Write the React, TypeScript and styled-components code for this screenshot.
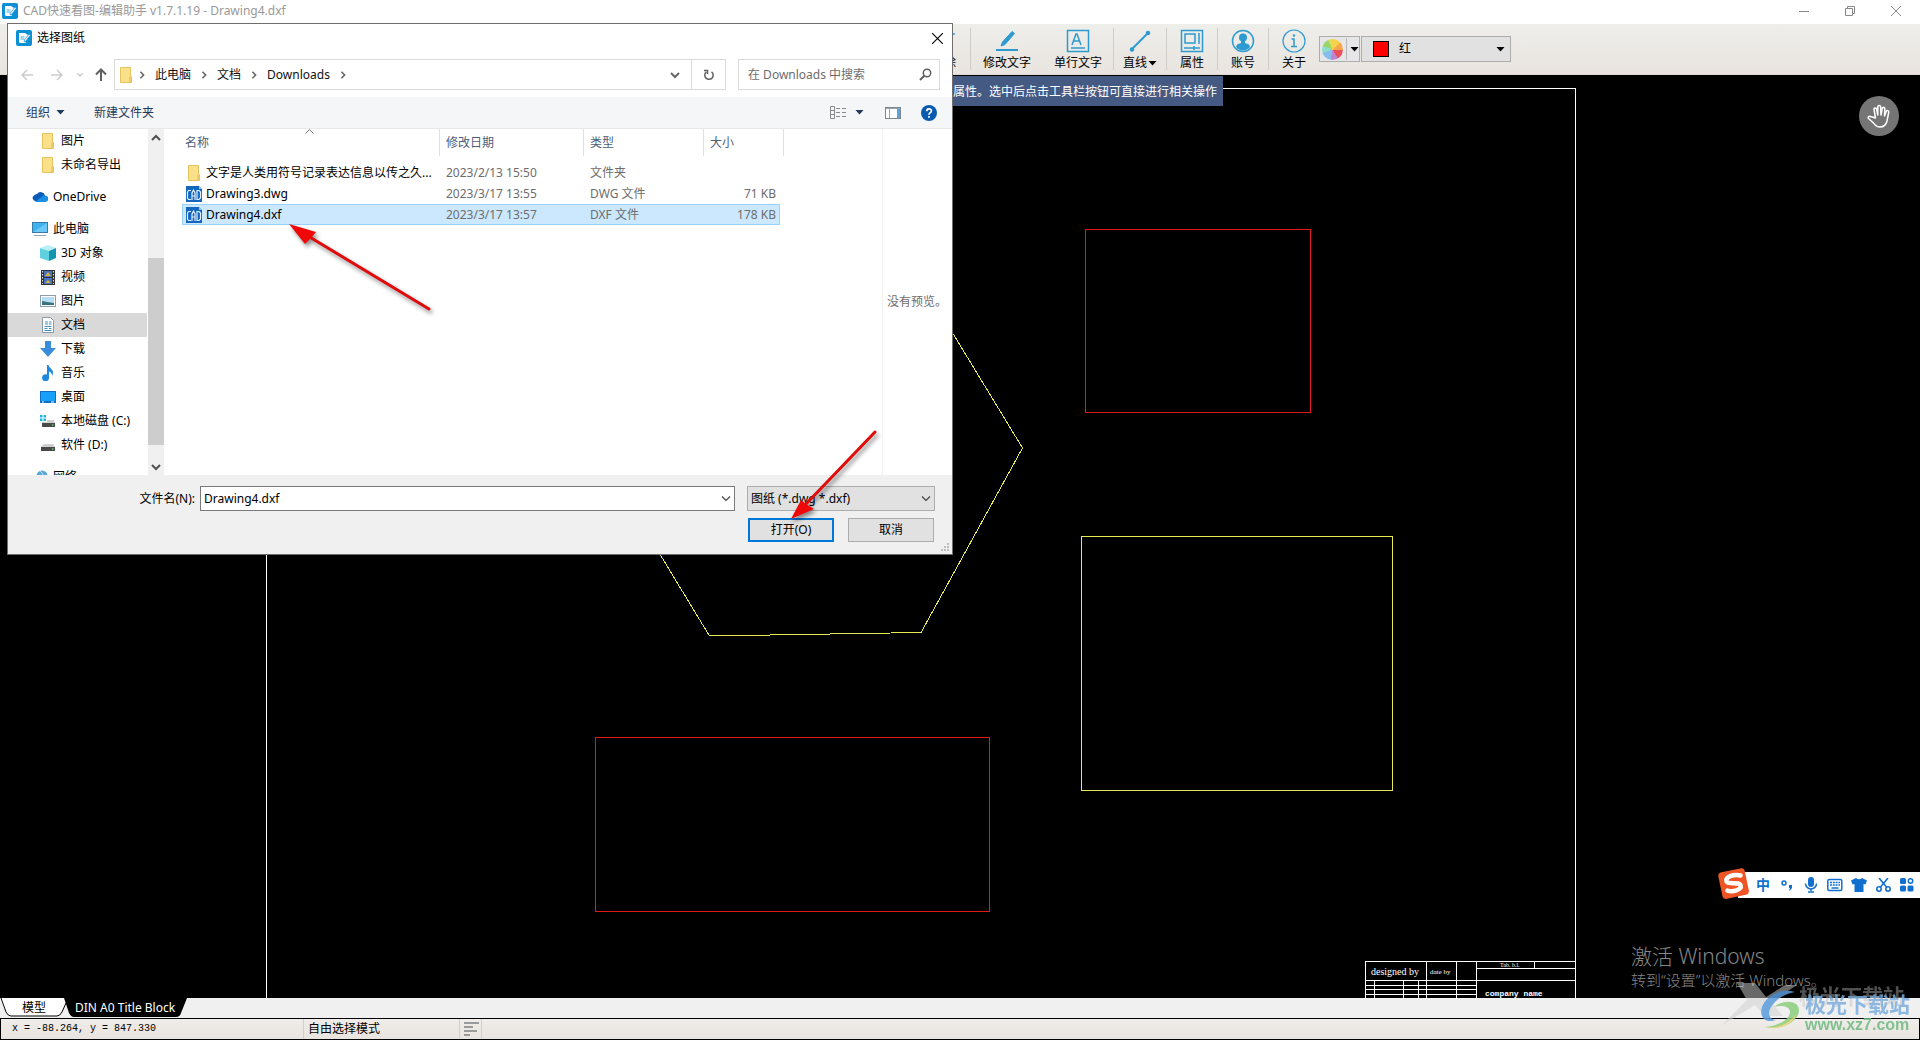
import React from "react";
import styled, { createGlobalStyle, css } from "styled-components";

const uiFont = `"Noto Sans", "Noto Sans CJK SC", sans-serif`;

const GlobalStyle = createGlobalStyle`
  *, *::before, *::after { box-sizing: border-box; }
  body { margin: 0; background: #000; }
  body, button, input, select, table { font-family: ${uiFont}; font-size: 12px; line-height: 16px; }
  button { margin: 0; padding: 0; border: 0; background: none; color: inherit; }
  svg { display: block; flex: none; }
`;

/* ---------- application window ---------- */

const Window = styled.div`
  position: relative;
  display: grid;
  grid-template-rows: 24px 51px 1fr 20px 22px;
  height: 100vh;
  min-height: 640px;
  overflow: hidden;
`;

const TitleBar = styled.header`
  display: flex;
  align-items: center;
  gap: 5px;
  padding: 0 4px 2px 2px;
  background: #fff;
  color: #999;
`;

const TitleText = styled.h1`
  flex: 1;
  margin: 0;
  font-size: 12px;
  font-weight: 400;
  white-space: nowrap;
`;

const CaptionButton = styled.button`
  display: flex;
  justify-content: center;
  align-items: center;
  width: 41px;
  height: 20px;
`;

const Toolbar = styled.div`
  display: flex;
  align-items: stretch;
  padding-left: 918px;
  background: linear-gradient(#eeeeea, #e9e4df);
  border-bottom: 1px solid #dcd8d3;
`;

const ToolButton = styled.button<{ $w?: number }>`
  display: flex;
  flex-direction: column;
  align-items: center;
  gap: 2px;
  width: ${(p) => p.$w ?? 50}px;
  padding-top: 5px;
  color: #000;
  white-space: nowrap;
`;

const ToolLabel = styled.span`
  display: flex;
  align-items: center;
  gap: 1px;
`;

const ToolDivider = styled.span`
  width: 1px;
  margin: 4px 0;
  background: #cfccc8;
`;

const ColorWheelButton = styled.button`
  display: flex;
  align-items: center;
  align-self: center;
  width: 41px;
  height: 26px;
  padding-left: 2px;
  border: 1px solid #adadad;
  background: #e6e6e8;
`;

const Wheel = styled.span`
  width: 21px;
  height: 21px;
  margin-right: 3px;
  border-radius: 50%;
  background: conic-gradient(#f4d24c 0 45deg, #f6a64a 45deg 95deg, #e8505c 95deg 150deg, #c084d0 150deg 190deg, #86bdec 190deg 250deg, #8fdcc8 250deg 290deg, #9cd46a 290deg 335deg, #d6e05c 335deg);
`;

const WheelCaret = styled.span`
  display: flex;
  align-items: center;
  height: 22px;
  padding-left: 3px;
  border-left: 1px solid #b8b8b8;
`;

const ColorCombo = styled.button`
  display: flex;
  align-items: center;
  align-self: center;
  width: 150px;
  height: 26px;
  margin-left: 1px;
  padding: 0 5px 0 11px;
  border: 1px solid #adadad;
  background: #e1e1e1;
  color: #000;
  text-align: left;
`;

const Swatch = styled.span`
  width: 16px;
  height: 16px;
  margin-right: 10px;
  border: 1px solid #000;
  background: #f00;
`;

const ComboText = styled.span`
  flex: 1;
`;

const Canvas = styled.main`
  position: relative;
  background: #000;
  overflow: hidden;
`;

const Drawing = styled.svg`
  position: absolute;
  inset: 0;
  width: 100%;
  height: 100%;
`;

const Hint = styled.div`
  position: absolute;
  top: 1px;
  left: 900px;
  height: 30px;
  padding: 2px 6px 0 53px;
  background: #455a82;
  color: #fff;
  line-height: 28px;
  white-space: nowrap;
`;

const PanButton = styled.button`
  position: absolute;
  top: 21px;
  right: 21px;
  display: grid;
  place-items: center;
  width: 40px;
  height: 40px;
  border-radius: 50%;
  background: #757575;
`;

const Activation = styled.div`
  position: absolute;
  right: 96px;
  bottom: 8px;
  width: 193px;
  color: #868686;
  white-space: nowrap;
`;

const ActivationTitle = styled.p`
  margin: 0;
  font-size: 21px;
  font-weight: 300;
  line-height: 28px;
`;

const ActivationText = styled.p`
  margin: 0;
  font-size: 15px;
  font-weight: 300;
  line-height: 20px;
`;

const TabStrip = styled.nav`
  display: flex;
  background: #f0f0f0;
`;

const Tab = styled.button<{ $active?: boolean }>`
  position: relative;
  width: ${(p) => (p.$active ? 123 : 64)}px;
  height: 19px;
  padding: ${(p) => (p.$active ? "0 0 0 11px" : "0 0 0 4px")};
  color: ${(p) => (p.$active ? "#fff" : "#000")};
  text-align: ${(p) => (p.$active ? "left" : "center")};
  white-space: nowrap;
`;

const TabShape = styled.svg`
  position: absolute;
  inset: 0;
  overflow: visible;
`;

const TabText = styled.span`
  position: relative;
`;

const StatusBar = styled.footer`
  display: flex;
  align-items: stretch;
  border: 1px solid #000;
  background: linear-gradient(#efece9, #e9e4df);
  color: #000;
  line-height: 20px;
`;

const StatusCell = styled.span<{ $w: number; $mono?: boolean }>`
  display: flex;
  align-items: center;
  width: ${(p) => p.$w}px;
  padding-left: ${(p) => (p.$mono ? 11 : 4)}px;
  border-right: 1px solid #d2cfcb;
  white-space: pre;
  ${(p) => p.$mono && css`font-family: "Liberation Mono", monospace; font-size: 10px;`}
`;

/* ---------- open-file dialog ---------- */

const Dialog = styled.section`
  position: absolute;
  top: 23px;
  left: 7px;
  display: flex;
  flex-direction: column;
  width: 946px;
  border: 1px solid #6e6e6e;
  background: #fff;
  color: #000;
`;

const DialogTitle = styled.header`
  display: flex;
  align-items: center;
  gap: 5px;
  height: 28px;
  padding: 0 7px 0 8px;
`;

const DialogName = styled.h2`
  flex: 1;
  margin: 0;
  font-size: 12px;
  font-weight: 400;
`;

const CloseButton = styled.button`
  display: grid;
  place-items: center;
  width: 16px;
  height: 16px;
`;

const AddressRow = styled.div`
  display: flex;
  align-items: center;
  height: 45px;
  padding: 0 12px 0 4px;
`;

const NavButton = styled.button<{ $w: number }>`
  display: grid;
  place-items: center;
  width: ${(p) => p.$w}px;
  height: 30px;
`;

const AddressBox = styled.div`
  display: flex;
  flex: 1;
  align-items: center;
  height: 31px;
  padding-left: 3px;
  border: 1px solid #d9d9d9;
`;

const Crumb = styled.button`
  padding: 0 5px;
  color: #111;
`;

const CrumbArrow = styled.span`
  display: grid;
  place-items: center;
  width: 16px;
`;

const Spacer = styled.span`
  flex: 1;
`;

const RefreshButton = styled.button`
  display: grid;
  place-items: center;
  width: 34px;
  height: 29px;
  border-left: 1px solid #d9d9d9;
`;

const SearchBox = styled.label`
  display: flex;
  align-items: center;
  width: 202px;
  height: 31px;
  margin-left: 12px;
  padding: 0 7px 0 9px;
  border: 1px solid #d9d9d9;
`;

const SearchInput = styled.input`
  flex: 1;
  min-width: 0;
  padding: 0;
  border: 0;
  outline: 0;
  &::placeholder { color: #6d6d6d; opacity: 1; }
`;

const CommandBar = styled.div`
  display: flex;
  align-items: center;
  height: 32px;
  padding: 0 15px 0 18px;
  border-bottom: 1px solid #e6e8ea;
  background: #f5f6f7;
  color: #1e395b;
`;

const CommandButton = styled.button<{ $gap?: number }>`
  display: flex;
  align-items: center;
  gap: 6px;
  margin-right: ${(p) => p.$gap ?? 0}px;
`;

const Body = styled.div`
  display: flex;
  height: 346px;
`;

const Tree = styled.ul`
  width: 139px;
  margin: 0;
  padding: 0;
  list-style: none;
  overflow: hidden;
`;

const TreeItem = styled.li<{ $level: number; $selected?: boolean; $spaced?: boolean }>`
  display: flex;
  align-items: center;
  gap: 5px;
  height: 24px;
  margin-top: ${(p) => (p.$spaced ? 8 : 0)}px;
  padding-left: ${(p) => (p.$level === 1 ? 24 : 32)}px;
  background: ${(p) => (p.$selected ? "#d9d9d9" : "transparent")};
  white-space: nowrap;
`;

const ScrollTrack = styled.div`
  display: flex;
  flex-direction: column;
  align-items: center;
  justify-content: space-between;
  width: 16px;
  margin: 0 2px 0 1px;
  background: #f0f0f0;
`;

const ScrollEnd = styled.button`
  display: grid;
  place-items: center;
  width: 16px;
  height: 17px;
`;

const ScrollGap = styled.span`
  flex: 112;
`;

const ScrollThumb = styled.span`
  flex: 187;
  width: 16px;
  background: #cdcdcd;
`;

const ScrollRest = styled.span`
  flex: 13;
`;

const Files = styled.div`
  flex: 1;
  padding-left: 16px;
`;

const FileTable = styled.table`
  display: block;
  border-collapse: collapse;
`;

const FileHead = styled.thead`
  display: block;
  margin-bottom: 6px;
`;

const FileBody = styled.tbody`
  display: block;
`;

const HeadRow = styled.tr`
  display: grid;
  grid-template-columns: 258px 144px 120px 80px;
  height: 27px;
`;

const HeadCell = styled.th<{ $first?: boolean }>`
  position: relative;
  padding: 6px 0 0 ${(p) => (p.$first ? 3 : 6)}px;
  border-right: 1px solid #e0e0e0;
  color: #4c607a;
  font-weight: 400;
  text-align: left;
`;

const SortMark = styled.svg`
  position: absolute;
  top: 0;
  left: 123px;
`;

const FileRow = styled.tr<{ $selected?: boolean }>`
  display: grid;
  grid-template-columns: 258px 144px 120px 76px;
  align-items: center;
  width: fit-content;
  height: 21px;
  color: #6d6d6d;
  box-shadow: ${(p) => (p.$selected ? "inset 0 0 0 1px #99d1ff" : "none")};
  background: ${(p) => (p.$selected ? "#cce8ff" : "transparent")};
`;

const Cell = styled.td<{ $right?: boolean }>`
  padding: 0 4px 0 6px;
  text-align: ${(p) => (p.$right ? "right" : "left")};
  white-space: nowrap;
`;

const NameCell = styled.td`
  display: flex;
  align-items: center;
  gap: 4px;
  padding: 0 0 0 4px;
  color: #000;
  white-space: nowrap;
`;

const Preview = styled.aside`
  display: flex;
  align-items: center;
  width: 70px;
  padding-left: 4px;
  border-left: 1px solid #f3f3f3;
  color: #6d6d6d;
  white-space: nowrap;
  overflow: hidden;
`;

const DialogFooter = styled.div`
  position: relative;
  display: flex;
  flex-direction: column;
  gap: 7px;
  padding: 11px 17px 12px 0;
  background: #f0f0f0;
`;

const FooterRow = styled.div<{ $inset?: boolean }>`
  display: flex;
  justify-content: flex-end;
  align-items: center;
  gap: ${(p) => (p.$inset ? 14 : 0)}px;
  padding-right: ${(p) => (p.$inset ? 1 : 0)}px;
`;

const NameLabel = styled.label`
  width: 187px;
  margin-right: 5px;
  text-align: right;
`;

const ComboFrame = styled.div<{ $fixed?: boolean }>`
  position: relative;
  display: flex;
  flex: ${(p) => (p.$fixed ? "none" : 1)};
  width: ${(p) => (p.$fixed ? "188px" : "auto")};
  height: 25px;
  margin-left: ${(p) => (p.$fixed ? 12 : 0)}px;
  border: 1px solid ${(p) => (p.$fixed ? "#adadad" : "#7a7a7a")};
  background: ${(p) => (p.$fixed ? "#e1e1e1" : "#fff")};
`;

const NameInput = styled.input`
  flex: 1;
  padding: 0 24px 0 3px;
  border: 0;
  outline: 0;
  background: transparent;
`;

const TypeSelect = styled.select`
  flex: 1;
  padding: 0 24px 0 3px;
  border: 0;
  outline: 0;
  background: transparent;
  appearance: none;
  color: #000;
`;

const ComboArrow = styled.svg`
  position: absolute;
  top: 9px;
  right: 3px;
  pointer-events: none;
`;

const PushButton = styled.button<{ $primary?: boolean }>`
  width: 86px;
  height: 24px;
  border: ${(p) => (p.$primary ? "2px solid #0078d7" : "1px solid #adadad")};
  background: #e1e1e1;
  color: #000;
`;

const Grip = styled.svg`
  position: absolute;
  right: 2px;
  bottom: 2px;
`;

/* ---------- overlays ---------- */

const Marks = styled.svg`
  position: absolute;
  inset: 0;
  width: 100%;
  height: 100%;
  pointer-events: none;
  filter: drop-shadow(2px 3px 2px rgba(0, 0, 0, 0.45));
`;

const ImeBar = styled.div`
  position: absolute;
  right: 0;
  bottom: 142px;
  display: flex;
  align-items: center;
  justify-content: space-between;
  width: 182px;
  height: 26px;
  padding: 0 5px 0 17px;
  background: #fff;
  color: #1170cf;
`;

const ImeLogo = styled.svg`
  position: absolute;
  left: -21px;
  bottom: -2px;
`;

const ImeButton = styled.button`
  display: grid;
  place-items: center;
  width: 16px;
  height: 18px;
  color: #1170cf;
  font-size: 14px;
  font-weight: 700;
`;

const Watermark = styled.div`
  position: absolute;
  right: 10px;
  bottom: 6px;
  display: flex;
  opacity: 0.85;
  pointer-events: none;
`;

const WatermarkText = styled.div`
  display: flex;
  flex-direction: column;
  margin-left: 4px;
  padding-top: 12px;
`;

const WatermarkName = styled.span`
  color: #7aaede;
  font-size: 21px;
  font-weight: 700;
  line-height: 24px;
  text-shadow: -6px -8px 0 rgba(190, 190, 190, 0.5);
  white-space: nowrap;
`;

const WatermarkSite = styled.span`
  color: #6fba80;
  font-family: "Liberation Sans", sans-serif;
  font-size: 16px;
  font-weight: 700;
  line-height: 18px;
`;

/* ---------- icons ---------- */

const AppIcon = () => (
  <svg width="16" height="16" viewBox="0 0 16 16">
    <rect width="16" height="16" rx="2" fill="#0d8fd4" />
    <path d="M3 3h6l3 2v2l-3 4 1 2H4L3 12z" fill="#fff" />
    <path d="M14.500 5L10 11l-2 1 .5-2L13 4z" fill="#fff" stroke="#0d8fd4" strokeWidth=".7" />
    <path d="M4.500 9h4M4.500 7h4" stroke="#49a9df" strokeWidth="1.200" />
  </svg>
);

const Folder = () => (
  <svg width="16" height="16" viewBox="0 0 16 16">
    <path d="M2.500 .5h10v9h1v6h-11z" fill="#fbe08a" stroke="#e6c35c" />
    <path d="M12 10v5.500" stroke="#e0b548" />
  </svg>
);

const Caret = ({ color = "#000" }: { color?: string }) => (
  <svg width="9" height="5" viewBox="0 0 9 5"><path d="M.5 0h8L4.500 4.500z" fill={color} /></svg>
);

const Cross = ({ size, color }: { size: number; color: string }) => (
  <svg width={size} height={size} viewBox="0 0 10 10"><path d="M0 0l10 10M10 0L0 10" stroke={color} fill="none" /></svg>
);

const Chevron = ({ dir, color = "#666", w = 1.5 }: { dir: "right" | "down" | "up"; color?: string; w?: number }) => {
  const d = { right: "M3 1l4 4-4 4", down: "M1 3l4 4 4-4", up: "M1 7l4-4 4 4" }[dir];
  const s = dir === "right" ? 8 : 10;
  return <svg width={s} height={s} viewBox="0 0 10 10"><path d={d} stroke={color} strokeWidth={w} fill="none" /></svg>;
};

const CadFile = () => (
  <svg width="16" height="16" viewBox="0 0 16 16">
    <path d="M0 0h13l3 3v13H0z" fill="#1266c0" />
    <path d="M13 0l3 3h-3z" fill="#9cc8f2" />
    <path d="M5 4.500H2.500L1.500 6v6l1 1.500H5M6 14V7l1.500-3L9 7v7M6 10h3M11 4.500v9h2l1.500-1.500V6L13 4.500z" stroke="#e4f1ff" strokeWidth="1.200" fill="none" />
  </svg>
);

type Kind = "folder" | "cloud" | "pc" | "cube" | "video" | "picture" | "doc" | "down" | "music" | "desktop" | "diskC" | "diskD" | "net";

const TreeIcon = ({ kind }: { kind: Kind }) => {
  if (kind === "folder") return <Folder />;
  const art: Record<Exclude<Kind, "folder">, React.ReactNode> = {
    cloud: (<><path d="M5 5a4.500 4.500 0 0 1 8 1.500L8 12H3A3 3 0 0 1 2 6.500 4 4 0 0 1 5 5z" fill="#0a5cb8" /><path d="M3 13l7-5.500a4 4 0 0 1 3-1 3.200 3.200 0 0 1 0 6.500z" fill="#1b8fe6" /></>),
    pc: (<><rect x=".5" y="1.500" width="15" height="10" fill="#3db2ee" stroke="#3a7ca8" /><path d="M1 11L15 2v9z" fill="#6cc8f6" /><path d="M2 14.500h12" stroke="#8fa3b0" /></>),
    cube: (<><path d="M8 0l8 3-7 3-9-3z" fill="#b8f0f6" /><path d="M0 3l9 3v10l-9-3z" fill="#5fd0de" /><path d="M9 6l7-3v10l-7 3z" fill="#1595b0" /></>),
    video: (<><rect x="1" y="1" width="14" height="15" fill="#333" /><path d="M2.500 2v13M13.500 2v13" stroke="#ddd" strokeDasharray="1.500 1.500" /><rect x="4" y="2" width="8" height="6" fill="#4673c4" /><rect x="4" y="9" width="8" height="6" fill="#4673c4" /><path d="M5 7l3-4 3 4zM5 14l3-3 3 3z" fill="#dab23c" /></>),
    picture: (<><rect x=".5" y="2.500" width="15" height="11" fill="#fff" stroke="#8b9dab" /><rect x="2" y="4" width="12" height="8" fill="#b7ddf5" /><path d="M2 8l5 1 7 1v2H2z" fill="#3a6f7d" /></>),
    doc: (<><path d="M2.500 .5h8l3 3v12h-11z" fill="#fff" stroke="#8c9aa5" /><path d="M5 5h3M5 7h3M9 5h2.500M9 7h2.500M4.500 9.500h7M4.500 11.500h3M9 11.500h2.500M4.500 13.500h7" stroke="#3c8fc8" /></>),
    down: <path d="M5 0h6v7h5l-8 9-8-9h5z" fill="#3a8ddb" />,
    music: <path d="M7 0h1.500c.5 3 4.500 4 4.500 7.500 0 1.500-.5 2.500-1 3.500 0-3-1.500-4-3-4.500V12A3.500 3.500 0 1 1 7 9.500z" fill="#1e88dd" />,
    desktop: (<><rect y="2" width="16" height="12" fill="#0f6fc4" /><rect x="1" y="3" width="14" height="9" fill="#17a0fa" /><path d="M2 13h2M11 13h3" stroke="#fff" /></>),
    diskC: (<><path d="M0 2h2.500v2.500H0zM3.500 2H6v2.500H3.500zM0 5.500h2.500V8H0zM3.500 5.500H6V8H3.500z" fill="#1cb4e0" /><path d="M7 7h7l1 3H2V9h5z" fill="#cfcfcf" /><rect x="2" y="10" width="13" height="4" fill="#4a4a4a" /><path d="M12 12h1.500" stroke="#7dff7d" /></>),
    diskD: (<><path d="M4 7h9l2 3H1z" fill="#cfcfcf" /><rect x="1" y="10" width="14" height="4" fill="#4a4a4a" /><path d="M12 12h1.500" stroke="#7dff7d" /></>),
    net: (<><circle cx="10" cy="7" r="5.500" fill="#58a9d6" /><path d="M8 2c3 2 4 6 3 10" stroke="#c5e6f6" fill="none" /></>),
  };
  return <svg width="16" height="16" viewBox="0 0 16 16">{art[kind]}</svg>;
};

const tree: { kind: Kind; text: string; level: number; spaced?: boolean; selected?: boolean }[] = [
  { kind: "folder", text: "图片", level: 2 },
  { kind: "folder", text: "未命名导出", level: 2 },
  { kind: "cloud", text: "OneDrive", level: 1, spaced: true },
  { kind: "pc", text: "此电脑", level: 1, spaced: true },
  { kind: "cube", text: "3D 对象", level: 2 },
  { kind: "video", text: "视频", level: 2 },
  { kind: "picture", text: "图片", level: 2 },
  { kind: "doc", text: "文档", level: 2, selected: true },
  { kind: "down", text: "下载", level: 2 },
  { kind: "music", text: "音乐", level: 2 },
  { kind: "desktop", text: "桌面", level: 2 },
  { kind: "diskC", text: "本地磁盘 (C:)", level: 2 },
  { kind: "diskD", text: "软件 (D:)", level: 2 },
  { kind: "net", text: "网络", level: 1, spaced: true },
];

const files = [
  { folder: true, name: "文字是人类用符号记录表达信息以传之久...", date: "2023/2/13 15:50", type: "文件夹", size: "" },
  { name: "Drawing3.dwg", date: "2023/3/17 13:55", type: "DWG 文件", size: "71 KB" },
  { name: "Drawing4.dxf", date: "2023/3/17 13:57", type: "DXF 文件", size: "178 KB", selected: true },
];

const toolColor = "#2e9bd0";
const ToolIcon = ({ children }: { children: React.ReactNode }) => (
  <svg width="24" height="24" viewBox="0 0 24 24" fill="none" stroke={toolColor} strokeWidth="1.500">{children}</svg>
);

const OpenDialog = () => (
  <Dialog role="dialog" aria-label="选择图纸">
    <DialogTitle>
      <AppIcon />
      <DialogName>选择图纸</DialogName>
      <CloseButton aria-label="关闭"><Cross size={11} color="#000" /></CloseButton>
    </DialogTitle>
    <AddressRow>
      <NavButton $w={30} aria-label="后退">
        <svg width="12" height="12" viewBox="0 0 12 12" fill="none" stroke="#ccc" strokeWidth="1.500"><path d="M12 6H1M6 1L1 6l5 5" /></svg>
      </NavButton>
      <NavButton $w={30} aria-label="前进">
        <svg width="12" height="12" viewBox="0 0 12 12" fill="none" stroke="#ccc" strokeWidth="1.500"><path d="M0 6h11M6 1l5 5-5 5" /></svg>
      </NavButton>
      <NavButton $w={16} aria-label="最近">
        <svg width="6" height="4" viewBox="0 0 6 4" fill="none" stroke="#ccc" strokeWidth="1.500"><path d="M0 0l3 3 3-3" /></svg>
      </NavButton>
      <NavButton $w={26} aria-label="上移">
        <svg width="12" height="13" viewBox="0 0 12 13" fill="none" stroke="#606060" strokeWidth="2"><path d="M6 13V2M1 6.500l5-5 5 5" /></svg>
      </NavButton>
      <AddressBox>
        <Folder />
        <CrumbArrow><Chevron dir="right" w={2} /></CrumbArrow>
        <Crumb>此电脑</Crumb>
        <CrumbArrow><Chevron dir="right" w={2} /></CrumbArrow>
        <Crumb>文档</Crumb>
        <CrumbArrow><Chevron dir="right" w={2} /></CrumbArrow>
        <Crumb>Downloads</Crumb>
        <CrumbArrow><Chevron dir="right" w={2} /></CrumbArrow>
        <Spacer />
        <NavButton $w={32} aria-label="历史"><Chevron dir="down" w={2} /></NavButton>
        <RefreshButton aria-label="刷新">
          <svg width="12" height="12" viewBox="0 0 12 12" fill="none" stroke="#606060" strokeWidth="1.500"><path d="M8.500 2.800A4.200 4.200 0 1 1 3.200 3M1 1.500h3.500V5" /></svg>
        </RefreshButton>
      </AddressBox>
      <SearchBox>
        <SearchInput type="text" placeholder="在 Downloads 中搜索" aria-label="搜索" />
        <svg width="13" height="13" viewBox="0 0 13 13" fill="none" stroke="#606060" strokeWidth="1.500"><circle cx="8" cy="5" r="3.700" /><path d="M5.500 7.500L1 12" strokeWidth="2" /></svg>
      </SearchBox>
    </AddressRow>
    <CommandBar>
      <CommandButton $gap={29}>组织<Caret color="#1e395b" /></CommandButton>
      <CommandButton>新建文件夹</CommandButton>
      <Spacer />
      <CommandButton $gap={21} aria-label="视图">
        <svg width="19" height="13" viewBox="0 0 19 13" fill="none" stroke="#8a8a8a">
          <path d="M.5 .5h4v12h-4zM.5 4.500h4M.5 8.500h4M6 2.500h4M12 2.500h4M6 6.500h4M12 6.500h4M6 10.500h4M12 10.500h4" />
        </svg>
        <Caret color="#1e395b" />
      </CommandButton>
      <CommandButton $gap={20} aria-label="预览窗格">
        <svg width="16" height="12" viewBox="0 0 16 12"><rect x=".5" y=".5" width="15" height="11" fill="#fff" stroke="#7d8790" /><rect x="12" y="1" width="3" height="10" fill="#58a6e0" /><path d="M1 1.500h14M4.500 2v9" stroke="#9aa4ad" /></svg>
      </CommandButton>
      <CommandButton aria-label="帮助">
        <svg width="16" height="16" viewBox="0 0 16 16"><circle cx="8" cy="8" r="8" fill="#0a5ab0" /><path d="M5.700 6.300C5.700 3 10.500 3.200 10.400 6 10.300 7.700 8 7.700 8 9.800M8 11v1.800" stroke="#fff" strokeWidth="1.700" fill="none" /></svg>
      </CommandButton>
    </CommandBar>
    <Body>
      <Tree>
        {tree.map((t, i) => (
          <TreeItem key={i} $level={t.level} $spaced={t.spaced} $selected={t.selected}>
            <TreeIcon kind={t.kind} />
            {t.text}
          </TreeItem>
        ))}
      </Tree>
      <ScrollTrack>
        <ScrollEnd aria-label="向上滚动"><Chevron dir="up" color="#505050" w={2} /></ScrollEnd>
        <ScrollGap />
        <ScrollThumb />
        <ScrollRest />
        <ScrollEnd aria-label="向下滚动"><Chevron dir="down" color="#505050" w={2} /></ScrollEnd>
      </ScrollTrack>
      <Files>
        <FileTable>
          <FileHead>
            <HeadRow>
              <HeadCell $first>
                名称
                <SortMark width="9" height="5" viewBox="0 0 9 5"><path d="M.5 4.500l4-4 4 4" fill="none" stroke="#777" /></SortMark>
              </HeadCell>
              <HeadCell>修改日期</HeadCell>
              <HeadCell>类型</HeadCell>
              <HeadCell>大小</HeadCell>
            </HeadRow>
          </FileHead>
          <FileBody>
            {files.map((f) => (
              <FileRow key={f.name} $selected={f.selected}>
                <NameCell>
                  {f.folder ? <Folder /> : <CadFile />}
                  {f.name}
                </NameCell>
                <Cell>{f.date}</Cell>
                <Cell>{f.type}</Cell>
                <Cell $right>{f.size}</Cell>
              </FileRow>
            ))}
          </FileBody>
        </FileTable>
      </Files>
      <Preview>没有预览。</Preview>
    </Body>
    <DialogFooter>
      <FooterRow>
        <NameLabel htmlFor="file-name">文件名(N):</NameLabel>
        <ComboFrame>
          <NameInput id="file-name" type="text" defaultValue="Drawing4.dxf" />
          <ComboArrow width="10" height="6" viewBox="0 0 10 6"><path d="M1 .5l4 4 4-4" fill="none" stroke="#444" strokeWidth="1.200" /></ComboArrow>
        </ComboFrame>
        <ComboFrame $fixed>
          <TypeSelect aria-label="文件类型"><option>图纸 (*.dwg *.dxf)</option></TypeSelect>
          <ComboArrow width="10" height="6" viewBox="0 0 10 6"><path d="M1 .5l4 4 4-4" fill="none" stroke="#444" strokeWidth="1.200" /></ComboArrow>
        </ComboFrame>
      </FooterRow>
      <FooterRow $inset>
        <PushButton $primary>打开(O)</PushButton>
        <PushButton>取消</PushButton>
      </FooterRow>
      <Grip width="9" height="9" viewBox="0 0 9 9"><path d="M6 0h2v2H6zM3 3h2v2H3zM6 3h2v2H6zM0 6h2v2H0zM3 6h2v2H3zM6 6h2v2H6z" fill="#bfbfbf" /></Grip>
    </DialogFooter>
  </Dialog>
);

export default function App() {
  return (
    <>
      <GlobalStyle />
      <Window>
        <TitleBar>
          <AppIcon />
          <TitleText>CAD快速看图-编辑助手 v1.7.1.19 - Drawing4.dxf</TitleText>
          <CaptionButton aria-label="最小化"><svg width="10" height="10" viewBox="0 0 10 10"><path d="M0 5.500h10" stroke="#888" /></svg></CaptionButton>
          <CaptionButton aria-label="还原"><svg width="10" height="10" viewBox="0 0 10 10"><path d="M.5 2.500h7v7h-7zM2.500 2.500v-2h7v7h-2" stroke="#888" fill="none" /></svg></CaptionButton>
          <CaptionButton aria-label="关闭"><Cross size={10} color="#888" /></CaptionButton>
        </TitleBar>

        <Toolbar>
          <ToolButton $w={52}>
            <ToolIcon><path d="M1 5h22M5 5v16h14V5" /></ToolIcon>
            <ToolLabel>删除</ToolLabel>
          </ToolButton>
          <ToolDivider />
          <ToolButton $w={72}>
            <ToolIcon><path d="M6 17l1.500-4L17 2.500l2.500 2L10 15.500z" fill={toolColor} strokeWidth="1" /><path d="M1 21h22" strokeWidth="2" /></ToolIcon>
            <ToolLabel>修改文字</ToolLabel>
          </ToolButton>
          <ToolButton $w={70}>
            <ToolIcon><path d="M1.500 1.500h21v21h-21zM5 19h14M6 16l4-11h1l4 11M7.500 12h6" /></ToolIcon>
            <ToolLabel>单行文字</ToolLabel>
          </ToolButton>
          <ToolDivider />
          <ToolButton $w={52}>
            <ToolIcon><path d="M4 20L20 4" strokeWidth="2" /><circle cx="4" cy="20.500" r="1.500" fill={toolColor} /><circle cx="20" cy="4" r="1.500" fill={toolColor} /></ToolIcon>
            <ToolLabel>直线<Caret /></ToolLabel>
          </ToolButton>
          <ToolDivider />
          <ToolButton>
            <ToolIcon><path d="M1.500 1.500h21v21h-21zM5 5h10v9H5zM19 4v11M4 19h16M14 17v4" /></ToolIcon>
            <ToolLabel>属性</ToolLabel>
          </ToolButton>
          <ToolDivider />
          <ToolButton>
            <ToolIcon><circle cx="12" cy="12" r="10.500" /><circle cx="12" cy="8.500" r="4" fill={toolColor} stroke="none" /><path d="M10 11h4v3l4 1.500 1 2.500a9 9 0 0 1-14 0l1-2.500L10 14z" fill={toolColor} stroke="none" /></ToolIcon>
            <ToolLabel>账号</ToolLabel>
          </ToolButton>
          <ToolDivider />
          <ToolButton>
            <ToolIcon><circle cx="12" cy="12" r="11" strokeWidth="1.200" /><path d="M9.500 10H12v7.500M9 17.500h6" /><circle cx="12" cy="6.500" r="1.200" fill={toolColor} stroke="none" /></ToolIcon>
            <ToolLabel>关于</ToolLabel>
          </ToolButton>
          <ColorWheelButton aria-label="颜色"><Wheel /><WheelCaret><Caret /></WheelCaret></ColorWheelButton>
          <ColorCombo><Swatch /><ComboText>红</ComboText><Caret /></ColorCombo>
        </Toolbar>

        <Canvas>
          <Drawing>
            <g transform="translate(0 -75)" fill="none" shapeRendering="crispEdges">
              <path d="M266.500 998V88.500H1575.500V998" stroke="#fff" />
              <path d="M1085.500 229.500h225v183h-225zM595.500 737.500h394v174h-394z" stroke="#e01818" />
              <path d="M1081.500 536.500h311v254h-311z" stroke="#e8e850" />
              <path d="M935 304L1022.500 448 921 632.500 709.500 636 661 556 600 455 700 304z" stroke="#e8e850" />
              <path d="M1365.500 998V961.500H1575M1365.500 980.500H1575M1426.500 961.500V998M1456.500 961.500V998M1476.500 961.500V998M1476.500 968.500H1575M1534.500 961.500v7M1365.500 985.500h111M1365.500 989.500h111M1365.500 994.500h111M1374.500 980.500V998M1403.500 980.500V998M1418.500 980.500V998" stroke="#fff" />
              <g fill="#fff" fontFamily='"Liberation Serif", serif'>
                <text x="1371" y="975" fontSize="10">designed by</text>
                <text x="1430" y="974" fontSize="7">date by</text>
                <text x="1500" y="967" fontSize="6">Tab. b.l.</text>
                <text x="1485" y="996" fontSize="8" fontWeight="700" fontFamily='"Liberation Mono", monospace'>company name</text>
              </g>
            </g>
          </Drawing>
          <Hint>属性。选中后点击工具栏按钮可直接进行相关操作</Hint>
          <PanButton aria-label="平移">
            <svg width="24" height="24" viewBox="0 0 24 24" fill="none" stroke="#fff" strokeWidth="1.500" strokeLinejoin="round" strokeLinecap="round">
              <path d="M8.500 14L7 5.500a1.300 1.300 0 0 1 2.600-.5l1.200 6V2.800a1.400 1.400 0 0 1 2.800 0L14 11l1.200-6.500a1.300 1.300 0 0 1 2.600.4L17.500 12l1.700-4.500a1.300 1.300 0 0 1 2.500.8L20 17c-1 4-3 6-7 6s-5-2-7-4.500L1.500 14.500c-1-1.500.8-2.700 2-2z" />
            </svg>
          </PanButton>
          <Activation>
            <ActivationTitle>激活 Windows</ActivationTitle>
            <ActivationText>转到“设置”以激活 Windows。</ActivationText>
          </Activation>
        </Canvas>

        <TabStrip>
          <Tab>
            <TabShape width="64" height="19"><path d="M0 0L6 14q2 4 5 4h46q3 0 5-4L67 0z" fill="#fff" /><path d="M1 0L6 14q2 4 5 4h46q3 0 5-4L66 5" fill="none" stroke="#000" /></TabShape>
            <TabText>模型</TabText>
          </Tab>
          <Tab $active>
            <TabShape width="123" height="19"><path d="M0 0L5 15q2 4 5 4H112q4 0 5-4L123 0z" fill="#000" /></TabShape>
            <TabText>DIN A0 Title Block</TabText>
          </Tab>
        </TabStrip>

        <StatusBar>
          <StatusCell $w={303} $mono>x = -88.264, y = 847.330</StatusCell>
          <StatusCell $w={156}>自由选择模式</StatusCell>
          <StatusCell $w={22}>
            <svg width="16" height="14" viewBox="0 0 16 14" stroke="#9a9a9a" strokeWidth="2"><path d="M0 1h15M0 5h9M0 9h13M0 13h6" /></svg>
          </StatusCell>
        </StatusBar>

        <OpenDialog />

        <Marks>
          <path d="M429 309L308 236" stroke="#e00b0b" strokeWidth="3" strokeLinecap="round" />
          <path d="M289 224l27 8-5 6-6 6z" fill="#f00808" />
          <path d="M875 432L806 504" stroke="#e00b0b" strokeWidth="3" strokeLinecap="round" />
          <path d="M791 519l10-19 5 4 8 5z" fill="#f00808" />
        </Marks>

        <ImeBar>
          <ImeLogo width="34" height="34" viewBox="0 0 34 34">
            <g transform="rotate(-12 17 17)"><rect x="3" y="4" width="27" height="27" rx="4" fill="#ee5424" /><path d="M25 11C19 8 10 9 10 13.500c0 4.500 13 2.500 13 7.500 0 4-9 5-14 2" stroke="#fff" strokeWidth="4.500" fill="none" strokeLinecap="round" /></g>
          </ImeLogo>
          <ImeButton>中</ImeButton>
          <ImeButton aria-label="标点"><svg width="14" height="14" viewBox="0 0 14 14"><circle cx="4" cy="5" r="2" fill="none" stroke="currentColor" strokeWidth="1.500" /><path d="M9 7h3v3l-2 2.500H9l1-2.500H9z" fill="currentColor" /></svg></ImeButton>
          <ImeButton aria-label="语音"><svg width="14" height="16" viewBox="0 0 14 16"><rect x="4" width="6" height="10" rx="3" fill="currentColor" /><path d="M1.500 6.500a5.500 5.500 0 0 0 11 0M7 12v2M4 15h6" fill="none" stroke="currentColor" strokeWidth="1.500" /></svg></ImeButton>
          <ImeButton aria-label="键盘"><svg width="16" height="14" viewBox="0 0 16 14"><rect x=".8" y="1.500" width="14" height="11" rx="1.500" fill="none" stroke="currentColor" strokeWidth="1.500" /><path d="M3 4.500h10M3 7h10" stroke="currentColor" strokeWidth="1.500" strokeDasharray="2 .8" /><path d="M4.500 10h7" stroke="currentColor" strokeWidth="1.500" /></svg></ImeButton>
          <ImeButton aria-label="皮肤"><svg width="16" height="14" viewBox="0 0 16 14"><path d="M5 0q3 2.500 6 0l5 2.500-1.500 4L12.500 6v8h-9V6l-2 .5L0 2.500z" fill="currentColor" /></svg></ImeButton>
          <ImeButton aria-label="截图"><svg width="15" height="14" viewBox="0 0 15 14" fill="none" stroke="currentColor" strokeWidth="1.600"><circle cx="3" cy="11" r="2.200" /><circle cx="12" cy="11" r="2.200" /><path d="M3 0l7.500 9M12 0L4.500 9" /></svg></ImeButton>
          <ImeButton aria-label="工具箱"><svg width="14" height="14" viewBox="0 0 14 14" fill="currentColor"><rect y="0" width="6" height="6" rx="1.500" /><rect y="7.500" width="6" height="6" rx="1.500" /><rect x="7.500" y="7.500" width="6" height="6" rx="1.500" /><circle cx="10.500" cy="3" r="2.200" fill="none" stroke="currentColor" strokeWidth="1.500" /></svg></ImeButton>
        </ImeBar>

        <Watermark>
          <svg width="82" height="54" viewBox="0 0 82 54">
            <path d="M18 3h18l11 14L66 5h12L52 22l12 14H46L36 25 2 46 28 20z" fill="#cfcfcf" opacity=".6" />
            <path d="M76 12C56 6 38 24 43 36c3 7 10 5 14 4-9-1-9-10-1-18 6-6 13-9 20-10z" fill="#5a9bdc" />
            <path d="M55 27c9-8 25-7 25 3 0 12-19 21-34 17 14-1 25-8 25-15 0-6-9-7-16-5z" fill="#8ccf7c" />
            <path d="M46 47c14 2 25-4 31-13-2 10-18 17-31 13z" fill="#f2d46a" />
          </svg>
          <WatermarkText>
            <WatermarkName>极光下载站</WatermarkName>
            <WatermarkSite>www.xz7.com</WatermarkSite>
          </WatermarkText>
        </Watermark>
      </Window>
    </>
  );
}
